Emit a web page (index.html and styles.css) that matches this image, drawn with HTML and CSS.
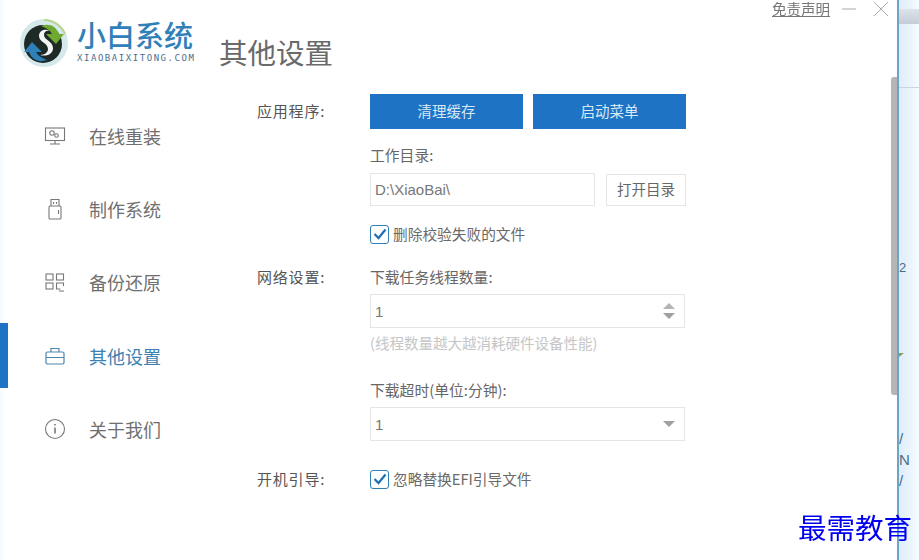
FILE: index.html
```html
<!DOCTYPE html>
<html>
<head>
    <title>小白系统</title>
    <link rel="stylesheet" href="styles.css">
</head>

<body>
<div class="window">
    <div class="sidebar">
        <div class="logo">
            <svg class="logoMark" width="50" height="52" viewBox="0 0 50 52">
                <circle cx="25" cy="26" r="24" fill="#d5e9ec"/>
                <circle cx="24" cy="27" r="19" fill="#1d2a26"/>
                <path d="M25 3a23 23 0 0 1 21 14" fill="none" stroke="#b7d68c" stroke-width="2"/>
                <path d="M22 9c8-3 15 0 18 8l5 0-8 10-10-10 6 0c-2-4-6-6-11-8z" fill="#6fa92f"/>
                <path d="M28 43c-8 3-15 0-18-8l-5 0 8-10 10 10-6 0c2 4 6 6 11 8z" fill="#2f7fb8"/>
                <path d="M31 14c-6-3-11 0-11 5 0 6 9 7 9 13 0 3-3 6-8 6 7 2 13-1 13-7 0-7-9-8-9-13 0-3 2-5 6-4z" fill="#f4f6f5"/>
            </svg>
            <div>
                <div class="logoName">小白系统</div>
                <div class="logoSite">XIAOBAIXITONG.COM</div>
            </div>
        </div>
        <div class="nav">
            <div class="navItem">
                <svg class="navIcon" width="22" height="22" viewBox="0 0 22 22" fill="none" stroke="#777" stroke-width="1.1">
                    <rect x="1.5" y="3" width="19" height="12.5"/>
                    <path d="M11 15.5v3M6 19h10"/>
                    <circle cx="8" cy="8" r="2.2"/>
                    <circle cx="12.5" cy="10.5" r="1.8"/>
                </svg>
                <span>在线重装</span>
            </div>
            <div class="navItem">
                <svg class="navIcon" width="22" height="22" viewBox="0 0 22 22" fill="none" stroke="#777" stroke-width="1.1">
                    <rect x="5" y="8" width="12" height="13" rx="1"/>
                    <path d="M7 8V1.5h8V8M9.5 4v2M12.5 4v2M14.5 12v4"/>
                </svg>
                <span>制作系统</span>
            </div>
            <div class="navItem">
                <svg class="navIcon" width="22" height="22" viewBox="0 0 22 22" fill="none" stroke="#777" stroke-width="1.1">
                    <rect x="2" y="3" width="7" height="6"/>
                    <rect x="12.5" y="3" width="7" height="6"/>
                    <rect x="2" y="12" width="7" height="6"/>
                    <path d="M19.5 15v-3h-7v6h4M15 20h5"/>
                </svg>
                <span>备份还原</span>
            </div>
            <div class="navItem active">
                <svg class="navIcon" width="22" height="22" viewBox="0 0 22 22" fill="none" stroke="#4d86ad" stroke-width="1.2">
                    <rect x="2" y="7" width="18" height="12" rx="1.5"/>
                    <path d="M7 7V3.5h8V7M2 12.5h18"/>
                </svg>
                <span>其他设置</span>
            </div>
            <div class="navItem">
                <svg class="navIcon" width="22" height="22" viewBox="0 0 22 22" fill="none" stroke="#777" stroke-width="1.1">
                    <circle cx="11" cy="11" r="9.5"/>
                    <path d="M11 9.5v6" stroke-width="1.6"/>
                    <path d="M11 6v1.6" stroke-width="1.6"/>
                </svg>
                <span>关于我们</span>
            </div>
        </div>
    </div>

    <div class="main">
        <div class="topBar">
            <a class="notice">免责声明</a>
            <svg width="16" height="16" viewBox="0 0 16 16" stroke="#aaa" fill="none"><path d="M1 8h14"/></svg>
            <svg class="closeIcon" width="16" height="16" viewBox="0 0 16 16" stroke="#aaa" fill="none"><path d="M1 1l14 14M15 1L1 15"/></svg>
        </div>
        <h1 class="pageTitle">其他设置</h1>

        <div class="group appGroup">
            <div class="groupLabel">应用程序:</div>
            <div class="groupBody">
                <div class="btnRow">
                    <button class="btnBlue">清理缓存</button>
                    <button class="btnBlue">启动菜单</button>
                </div>
                <div class="fieldLabel dirLabel">工作目录:</div>
                <div class="dirRow">
                    <div class="field dirField">D:\XiaoBai\</div>
                    <button class="btnPlain">打开目录</button>
                </div>
                <div class="check">
                    <span class="box"><svg width="14" height="12" viewBox="0 0 14 12" fill="none" stroke="#1f6fb5" stroke-width="2.2"><path d="M1.5 6l4 4 7-8.5"/></svg></span>
                    删除校验失败的文件
                </div>
            </div>
        </div>

        <div class="group netGroup">
            <div class="groupLabel">网络设置:</div>
            <div class="groupBody">
                <div class="fieldLabel">下载任务线程数量:</div>
                <div class="field wide">
                    <span>1</span>
                    <span class="spin"><i class="arrowUp"></i><i class="arrowDown"></i></span>
                </div>
                <div class="hint">(线程数量越大越消耗硬件设备性能)</div>
                <div class="fieldLabel timeoutLabel">下载超时(单位:分钟):</div>
                <div class="field wide">
                    <span>1</span>
                    <i class="arrowDown selectArrow"></i>
                </div>
            </div>
        </div>

        <div class="group bootGroup">
            <div class="groupLabel">开机引导:</div>
            <div class="groupBody">
                <div class="check">
                    <span class="box"><svg width="14" height="12" viewBox="0 0 14 12" fill="none" stroke="#1f6fb5" stroke-width="2.2"><path d="M1.5 6l4 4 7-8.5"/></svg></span>
                    忽略替换EFI引导文件
                </div>
            </div>
        </div>
    </div>
    <div class="scrollThumb"></div>
</div>

<div class="behind">
    <div class="behindHead"></div>
    <div class="behindLine"></div>
    <span class="bit bitTwo">2</span>
    <span class="bit bitGreen"></span>
    <span class="bit bitMarks">/<br>N<br>/</span>
</div>

<div class="watermark">最需教育</div>
</body>
</html>
```

FILE: styles.css
```css
html, body {
    margin: 0;
    height: 100%;
    overflow: hidden;
}

body {
    display: flex;
    position: relative;
    background-color: #fff;
    font-family: "Noto Sans CJK SC", "Liberation Sans", sans-serif;
    color: #666;
    font-size: 14px;
}

.window {
    width: 897px;
    height: 560px;
    display: flex;
    position: relative;
    flex-shrink: 0;
    background-color: #fff;
    filter: blur(0.35px);
}

/* sidebar */
.sidebar {
    width: 219px;
    flex-shrink: 0;
    background: linear-gradient(to right, #f2fbfe, #fff 6px);
}

.logo {
    height: 99px;
    box-sizing: border-box;
    padding: 17px 0 0 19px;
    display: flex;
    gap: 8px;
}

.logoMark { flex-shrink: 0; }

.logoName {
    font-size: 29px;
    line-height: 34px;
    font-weight: 500;
    color: #3180b8;
    white-space: nowrap;
}

.logoSite {
    font-family: "DejaVu Sans Mono", monospace;
    font-size: 9px;
    line-height: 10px;
    letter-spacing: 1.55px;
    color: #48708c;
    margin-top: 2px;
    white-space: nowrap;
}

.navItem {
    height: 73.3px;
    display: flex;
    align-items: center;
    padding-left: 44px;
    position: relative;
    font-size: 18px;
    color: #6f6f6f;
}

.navIcon {
    width: 22px;
    height: 22px;
    margin-right: 23px;
    flex-shrink: 0;
}

.navItem.active { color: #3d7fb0; }

.navItem.active::before {
    content: "";
    position: absolute;
    left: 0;
    top: 4px;
    width: 8px;
    height: 65px;
    background-color: #1f73c4;
}

/* main */
.main {
    flex-grow: 1;
    position: relative;
}

.topBar {
    position: absolute;
    top: 0;
    right: 8px;
    display: flex;
    align-items: center;
    gap: 11px;
}

.notice {
    font-size: 14.5px;
    line-height: 18px;
    text-decoration: underline;
    color: #777;
}

.closeIcon { margin-left: 5px; }

.pageTitle {
    margin: 0;
    height: 94px;
    box-sizing: border-box;
    padding-top: 31px;
    font-size: 28.5px;
    line-height: 42px;
    font-weight: 400;
    color: #6a6a6a;
}

.group { display: flex; }

.groupLabel {
    width: 113px;
    padding-left: 38px;
    flex-shrink: 0;
    font-size: 15px;
    letter-spacing: 0.8px;
    line-height: 20px;
    color: #555;
}

.appGroup .groupLabel { padding-top: 7px; }

.btnRow {
    display: flex;
    gap: 10px;
}

button {
    font-family: inherit;
    border: none;
    padding: 0 0 3px;
}

.btnBlue {
    width: 153px;
    height: 35px;
    background-color: #1f73c4;
    color: #d7e8f5;
    font-size: 14.5px;
}

.fieldLabel {
    line-height: 20px;
    font-size: 14.8px;
    color: #666;
    margin-bottom: 7px;
}

.dirLabel { margin-top: 16px; margin-bottom: 8px; }

.dirRow {
    display: flex;
    gap: 11px;
    align-items: flex-end;
}

.field {
    height: 34px;
    box-sizing: border-box;
    border: 1px solid #e6e6e6;
    padding: 0 4px;
    display: flex;
    align-items: center;
    justify-content: space-between;
    font-family: "Liberation Sans", sans-serif;
    font-size: 15px;
    color: #777;
}

.dirField { width: 225px; height: 33px; }
.wide { width: 315px; padding-right: 9px; }

.btnPlain {
    width: 80px;
    height: 32px;
    background-color: #fff;
    border: 1px solid #e6e6e6;
    color: #666;
    font-size: 14.5px;
}

.check {
    display: flex;
    align-items: center;
    gap: 4px;
    color: #6a6a6a;
    font-size: 14.7px;
    line-height: 20px;
}

.appGroup .check { margin-top: 18px; }

.box {
    width: 17px;
    height: 17px;
    border: 1px solid #2f7fb8;
    border-radius: 3px;
    display: flex;
    align-items: center;
    justify-content: center;
}

.netGroup { margin-top: 23px; }

.hint {
    margin-top: 5px;
    line-height: 20px;
    color: #c6c6c6;
    font-size: 14.5px;
}

.timeoutLabel { margin-top: 27px; }

.spin {
    display: flex;
    flex-direction: column;
    gap: 4px;
}

.arrowUp, .arrowDown {
    display: block;
    width: 0;
    height: 0;
    border-left: 6px solid transparent;
    border-right: 6px solid transparent;
}

.arrowUp { border-bottom: 6px solid #b4b4b4; }
.arrowDown { border-top: 6px solid #a0a0a0; }
.selectArrow { margin-right: 0; }

.bootGroup { margin-top: 28px; }

.scrollThumb {
    position: absolute;
    top: 77px;
    right: 0;
    width: 6px;
    height: 318px;
    background-color: #b5b5b5;
    border-radius: 3px 0 0 3px;
}

/* window behind, only a strip shows */
.behind {
    flex-grow: 1;
    position: relative;
    overflow: hidden;
    background: linear-gradient(to right, #dcedfb, #f6fbff);
    border-left: 2px solid #6fa3c4;
    font-family: "Liberation Sans", sans-serif;
    color: #4f6a86;
}

.behindHead {
    height: 15px;
    margin-top: 9px;
    background: linear-gradient(to bottom, #dde3ea, #c6ccd6);
}

.behindLine {
    margin-top: 63px;
    height: 1px;
    background-color: #c9d6e2;
}

.bit {
    position: absolute;
    left: 0;
    font-size: 13px;
    line-height: 14px;
}

.bitTwo { top: 261px; }
.bitGreen {
    top: 353px;
    width: 0;
    height: 0;
    border-top: 4px solid #7da35a;
    border-right: 5px solid transparent;
}
.bitMarks { top: 428px; font-size: 15px; line-height: 21px; }

.watermark {
    position: absolute;
    top: 509px;
    left: 798px;
    font-size: 28.5px;
    line-height: 36px;
    color: #0000f0;
    white-space: nowrap;
}
```
